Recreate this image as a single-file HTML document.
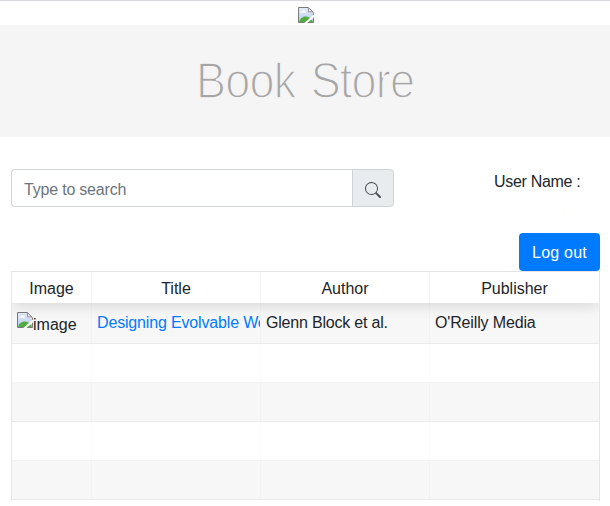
<!DOCTYPE html>
<html><head><meta charset="utf-8">
<style>
*{box-sizing:border-box;margin:0;padding:0}
html,body{width:610px;height:506px;overflow:hidden;background:#fff}
body{font-family:"Liberation Sans",sans-serif;font-size:16px;line-height:24px;color:#212529;position:relative}
.abs{position:absolute}
.topline{left:0;top:0;width:610px;height:1px;background:#d9dadd}
.topline2{left:0;top:1px;width:610px;height:1px;background:#fcfcfd}
.jumbo{left:0;top:25px;width:610px;height:112px;background:#f5f5f5}
.title{left:0;top:53px;width:610px;text-align:center;font-size:50px;line-height:56px;color:#a6a6a6;letter-spacing:-0.9px;word-spacing:4px;-webkit-text-stroke:1.6px #f5f5f5;transform:scaleX(0.9);transform-origin:306px 0}
.input{left:11px;top:169px;width:342px;height:38px;border:1px solid #ced4da;border-right:none;border-radius:4px 0 0 4px;background:#fff}
.ph{left:24px;top:178px;letter-spacing:-0.2px;color:#6c757d;font-size:16px;line-height:24px;white-space:nowrap}
.append{left:352px;top:169px;width:42px;height:38px;border:1px solid #ced4da;border-radius:0 4px 4px 0;background:#e9ecef}
.user{left:494px;top:170px;letter-spacing:-0.3px;white-space:nowrap}
.btn{left:519px;top:233px;width:81px;height:38px;background:#007bff;border-radius:4px;color:#fff;text-align:center;line-height:40px;letter-spacing:0.2px}

.tbl{left:11px;top:271px;width:589px;height:230px;border:1px solid rgba(0,0,0,0.1);border-bottom:none;overflow:hidden}
.thead{position:absolute;left:0;top:0;width:587px;height:31px;background:#fff;box-shadow:0 2px 15px 0 rgba(0,0,0,0.15);z-index:2}
.th{position:absolute;top:0;height:31px;line-height:33px;text-align:center;border-right:1px solid rgba(0,0,0,0.05)}
.row{position:absolute;left:0;width:587px;border-bottom:1px solid rgba(0,0,0,0.05)}
.odd{background:rgba(0,0,0,0.03)}
.td{position:absolute;top:0;height:100%;border-right:1px solid rgba(0,0,0,0.02);white-space:nowrap;overflow:hidden;padding:0 5px}
.c1{left:0;width:80px}.c2{left:80px;width:169px}.c3{left:249px;width:169px}.c4{left:418px;width:169px;border-right:none}
.t1{position:absolute;top:8px;line-height:24px;white-space:nowrap}
.link{color:#007bff}
</style></head>
<body>
<svg width="0" height="0" style="position:absolute"><symbol id="broken" viewBox="0 0 16 16">
  <defs><linearGradient id="g1" x1="0" y1="0" x2="0" y2="1"><stop offset="0" stop-color="#e4ecf9"/><stop offset="1" stop-color="#b6cbef"/></linearGradient></defs>
  <path d="M0.5 0.5H10.3L15.5 5.7V15.5H0.5Z" fill="url(#g1)"/>
  <path d="M10.5 0.5V4.8H15.5Z" fill="#fbfbfb"/>
  <path d="M2.3 5.7C2.3 4.7 3.2 4.3 4.1 4.4C4.5 3.1 6.5 2.9 6.9 4.3C7.7 4.3 8.1 4.9 8.1 5.7Z" fill="#fff"/>
  <path d="M1 15C2 12 4.5 9.6 7.5 9.6C10.2 9.6 12.8 11.2 14 13.2L15 15Z" fill="#50ac3e"/>
  <path d="M0.5 0.5H10.3L15.5 5.7V15.5H0.5Z" fill="none" stroke="#7b7b7b" stroke-width="1"/>
  <path d="M10.5 1V4.8H15" fill="none" stroke="#8a8a8a" stroke-width="0.9"/>
  <path d="M6.6 17.05L17.3 7.75" stroke="#fff" stroke-width="2"/>
</symbol></svg>
<div class="abs topline"></div>
<div class="abs topline2"></div>
<svg class="abs" style="left:298px;top:7px" width="16" height="16"><use href="#broken"/></svg>
<div class="abs jumbo"></div>
<div class="abs title">Book Store</div>
<div class="abs input"></div>
<div class="abs ph">Type to search</div>
<div class="abs append"></div>
<svg class="abs" style="left:365px;top:182px" width="16" height="16" viewBox="0 0 16 16" fill="#495057"><path d="M11.742 10.344a6.5 6.5 0 1 0-1.397 1.398h-.001c.03.04.062.078.098.115l3.85 3.85a1 1 0 0 0 1.415-1.414l-3.85-3.85a1.007 1.007 0 0 0-.115-.1zM12 6.5a5.5 5.5 0 1 1-11 0 5.5 5.5 0 0 1 11 0z"/></svg>
<div class="abs user">User Name :</div>
<div class="abs" style="left:564px;top:214px;width:1px;height:1px;background:#fff1d0"></div>
<div class="abs btn">Log out</div>
<div class="abs tbl">
 <div class="thead">
  <div class="th c1">Image</div><div class="th c2">Title</div><div class="th c3">Author</div><div class="th c4">Publisher</div>
 </div>
 <div class="row odd" style="top:31px;height:41px">
  <div class="td c1"><svg style="position:absolute;left:5px;top:9px" width="16" height="16"><use href="#broken"/></svg><span class="t1" style="left:21px;top:10px">image</span></div><div class="td c2"><span class="t1 link" style="left:5px;letter-spacing:-0.16px">Designing Evolvable Web APIs with ASP.NET</span></div><div class="td c3"><span class="t1" style="left:5px;letter-spacing:-0.2px">Glenn Block et al.</span></div><div class="td c4"><span class="t1" style="left:5px;letter-spacing:-0.15px">O'Reilly Media</span></div>
 </div>
 <div class="row" style="top:72px;height:39px">
  <div class="td c1"></div><div class="td c2"></div><div class="td c3"></div><div class="td c4"></div>
 </div>
 <div class="row odd" style="top:111px;height:39px">
  <div class="td c1"></div><div class="td c2"></div><div class="td c3"></div><div class="td c4"></div>
 </div>
 <div class="row" style="top:150px;height:39px">
  <div class="td c1"></div><div class="td c2"></div><div class="td c3"></div><div class="td c4"></div>
 </div>
 <div class="row odd" style="top:189px;height:39px">
  <div class="td c1"></div><div class="td c2"></div><div class="td c3"></div><div class="td c4"></div>
 </div>
</div>
</body></html>
